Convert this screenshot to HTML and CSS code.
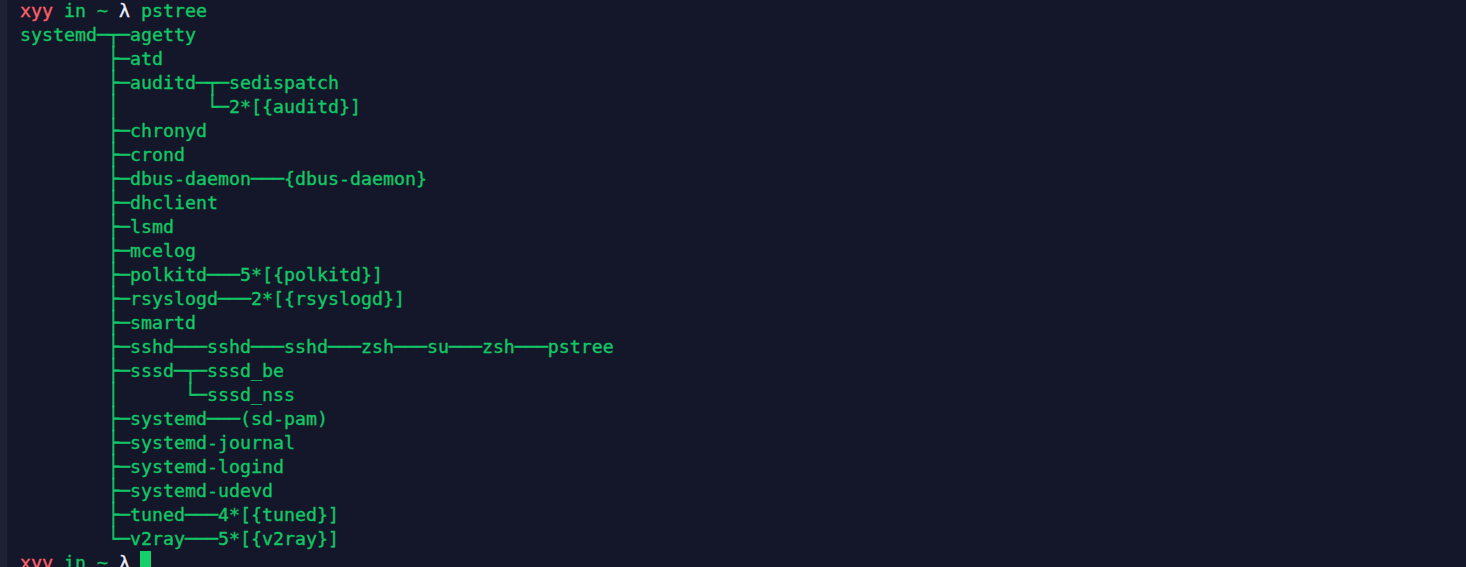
FILE: index.html
```html
<!DOCTYPE html>
<html>
<head>
<meta charset="utf-8">
<link rel="stylesheet" href="styles.css">
</head>
<body>
<div class="term">
<div class="gutter"></div>
<pre class="out"><span class="user">xyy</span> <span class="in">in</span> <span class="dir">~</span> <span class="lam">λ</span> pstree
systemd─<span class="v">┬</span>─agetty
        <span class="v">├</span>─atd
        <span class="v">├</span>─auditd─<span class="v">┬</span>─sedispatch
        <span class="v">│</span>        <span class="v">└</span>─2*[{auditd}]
        <span class="v">├</span>─chronyd
        <span class="v">├</span>─crond
        <span class="v">├</span>─dbus-daemon───{dbus-daemon}
        <span class="v">├</span>─dhclient
        <span class="v">├</span>─lsmd
        <span class="v">├</span>─mcelog
        <span class="v">├</span>─polkitd───5*[{polkitd}]
        <span class="v">├</span>─rsyslogd───2*[{rsyslogd}]
        <span class="v">├</span>─smartd
        <span class="v">├</span>─sshd───sshd───sshd───zsh───su───zsh───pstree
        <span class="v">├</span>─sssd─<span class="v">┬</span>─sssd_be
        <span class="v">│</span>      <span class="v">└</span>─sssd_nss
        <span class="v">├</span>─systemd───(sd-pam)
        <span class="v">├</span>─systemd-journal
        <span class="v">├</span>─systemd-logind
        <span class="v">├</span>─systemd-udevd
        <span class="v">├</span>─tuned───4*[{tuned}]
        <span class="v">└</span>─v2ray───5*[{v2ray}]
<span class="user">xyy</span> <span class="in">in</span> <span class="dir">~</span> <span class="lam">λ</span> <span class="cursor"> </span></pre>
</div>
</body>
</html>
```

FILE: styles.css
```css
html, body {
  margin: 0;
  padding: 0;
  background: #141729;
  height: 100%;
  overflow: hidden;
}
.term {
  display: flex;
  height: 567px;
  background: #141729;
}
.gutter {
  width: 7px;
  flex: none;
  background: #1e2133;
}
.out {
  margin: -1px 0 0 13px;
  font-family: "DejaVu Sans Mono", monospace;
  font-size: 18.27px;
  line-height: 24px;
  color: #12c866;
  white-space: pre;
  -webkit-text-stroke: 0.35px currentColor;
}
.v {
  display: inline-block;
  transform: scaleY(1.17);
}
.user { color: #ff5f6b; }
.in { color: #12c866; }
.dir { color: #12c866; }
.lam { color: #eef0ff; }
.cursor {
  display: inline-block;
  width: 11px;
  height: 24px;
  margin-left: -1px;
  background: #14d06b;
  vertical-align: top;
}
```
